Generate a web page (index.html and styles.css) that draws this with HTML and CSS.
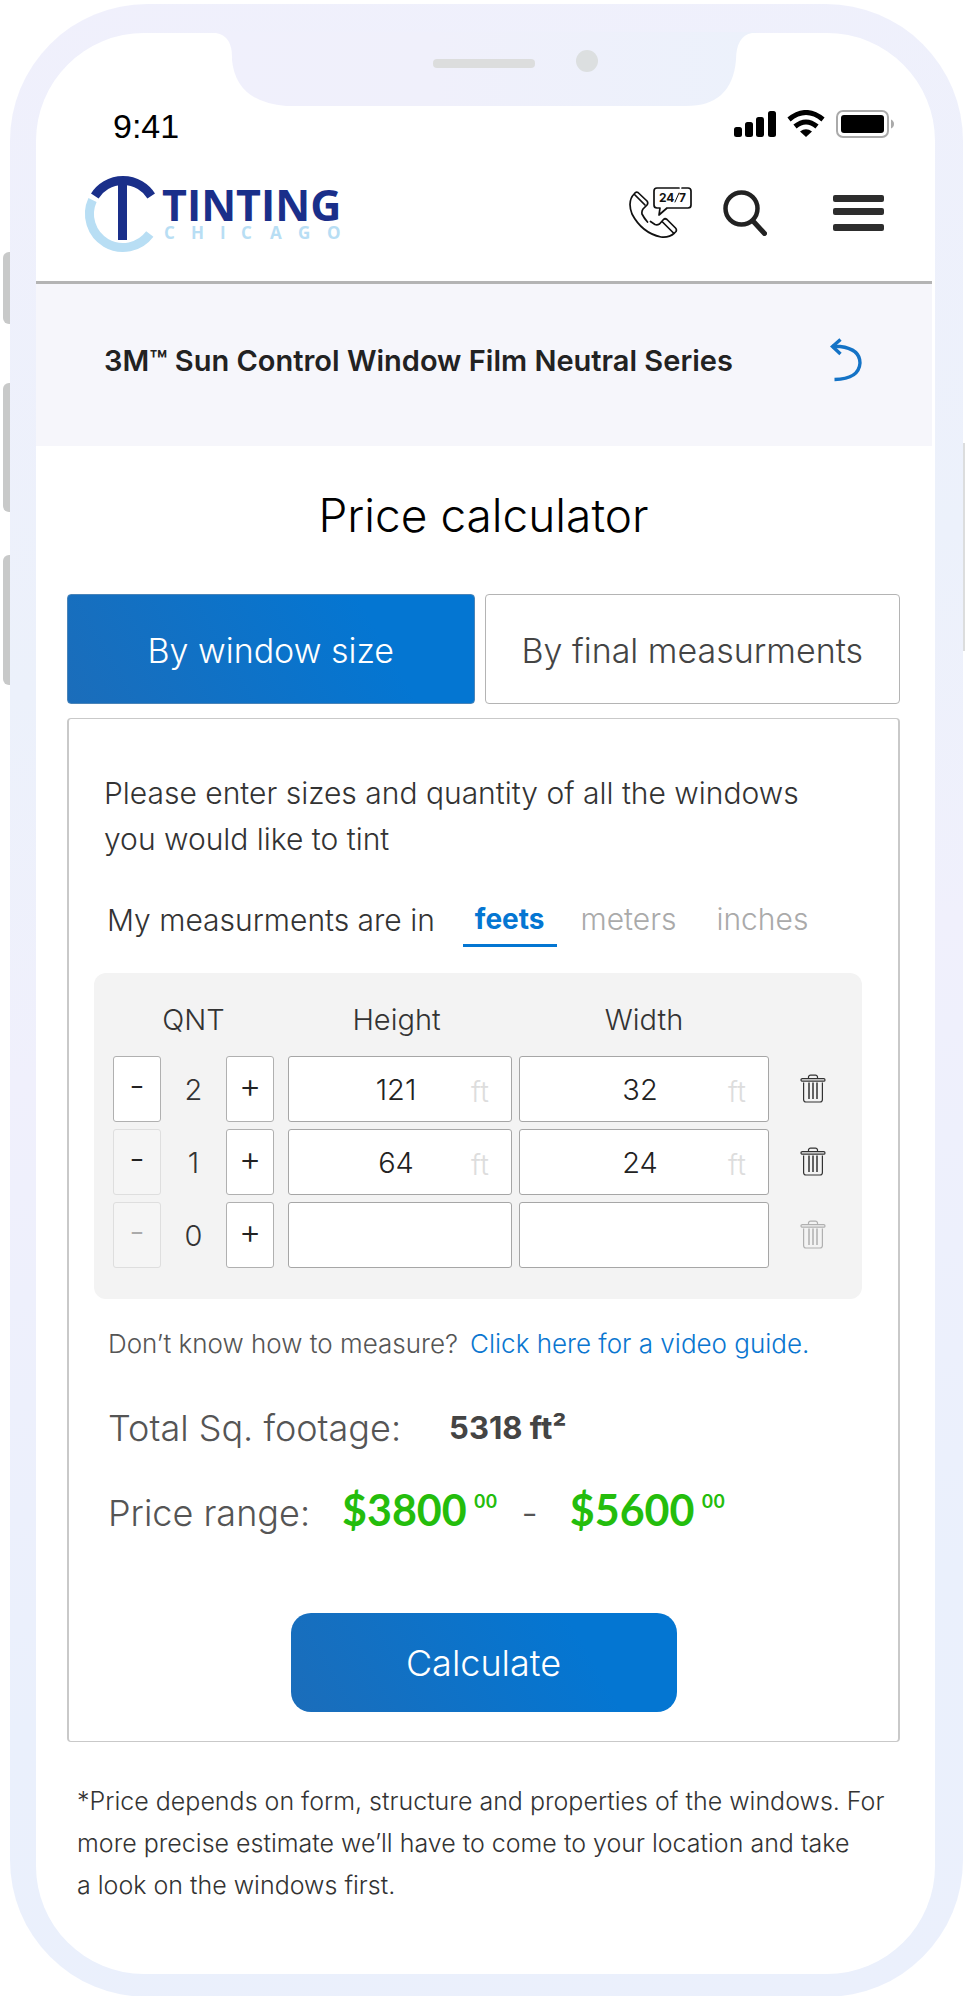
FILE: index.html
```html
<!DOCTYPE html>
<html lang="en">
<head>
<meta charset="utf-8">
<meta name="viewport" content="width=device-width, initial-scale=1">
<title>Tinting Chicago – Price calculator</title>
<link rel="stylesheet" href="styles.css">
</head>
<body>
<svg class="sprite" aria-hidden="true">
  <symbol id="trash" viewBox="0 0 26 30">
    <g fill="none" stroke="currentColor" stroke-width="1.2">
      <path d="M8.500 4V2.800Q9 1.200 10.500 1.200H15.500Q17 1.200 17.500 2.800V4"/>
      <rect x="1" y="4.600" width="24" height="2.600" rx="1.300"/>
      <path d="M3.600 8.500V25.500Q3.600 28 6 28H20Q22.400 28 22.400 25.500V8.500"/>
      <path d="M9 8.500V25M13 8.500V25M17 8.500V25" stroke-width="1.500"/>
    </g>
  </symbol>
</svg>
<div class="phone">
  <span class="side side-mute"></span>
  <span class="side side-up"></span>
  <span class="side side-down"></span>
  <span class="side side-power"></span>
  <div class="screen">
    <svg class="notch" viewBox="0 0 540 74" aria-hidden="true">
      <path fill="url(#notchFill)" d="M0 0H540V1H536Q520 4 520 28Q516 74 470 74H70Q20 70 16 28Q17 4 0 1Z"/>
      <defs><linearGradient id="notchFill"><stop offset="0" stop-color="#f0f0fc"/><stop offset=".4" stop-color="#f0f0fb"/><stop offset="1" stop-color="#ecf1fb"/></linearGradient></defs>
      <rect x="217" y="27" width="102" height="9" rx="4" fill="#dcdddd"/>
      <circle cx="371" cy="29" r="11" fill="#dcdfe0"/>
    </svg>
    <div class="status">
      <span class="time">9:41</span>
      <svg class="signals" viewBox="0 0 160 28" role="img" aria-label="Signal, Wi-Fi and battery full">
        <rect x="0" y="17" width="8" height="10" rx="2.500"/><rect x="11" y="12" width="8" height="15" rx="2.500"/><rect x="22" y="7" width="8" height="20" rx="2.500"/><rect x="34" y="1" width="8" height="26" rx="2.500"/>
        <g fill="none" stroke="#000" stroke-width="5"><path d="M55 9.500Q72 -4.500 89 9.500"/><path d="M61 16.500Q72 7.500 83 16.500"/></g>
        <path d="M66 21.500Q72 17 78 21.500L72 27Z"/>
        <rect x="103" y="1" width="51" height="26" rx="6" fill="#fff" stroke="#aaa" stroke-width="2"/>
        <rect x="107" y="5" width="43" height="18" rx="3"/>
        <path d="M157 9.500Q160 11 160 14Q160 17 157 18.500Z" fill="#aaa"/>
      </svg>
    </div>
    <header class="header">
      <a class="logo" href="#" aria-label="Tinting Chicago">
        <svg viewBox="0 0 260 76">
          <path d="M7.500 24A33.500 33.500 0 0 0 64.800 58" fill="none" stroke="#b8def4" stroke-width="9"/>
          <path d="M9.800 20A33.500 33.500 0 0 1 66.200 20" fill="none" stroke="#1a2f8a" stroke-width="9"/>
          <path d="M33 6H42V64H33Z" fill="#1a2f8a"/>
          <text class="logo-main" x="77" y="45">TINTING</text>
          <text class="logo-sub" x="79 106 135 156 185 213 242" y="63">CHICAGO</text>
        </svg>
      </a>
      <nav class="tools">
        <button class="tool" type="button" aria-label="Call us 24/7">
          <svg class="ic-phone" viewBox="0 0 64 54" fill="none" stroke="#111" stroke-width="1.700" stroke-linejoin="round" stroke-linecap="round">
            <path d="M18.500 36Q15 32 13 28Q12.500 25 14 23L18 19Q19.500 17 18 15L9 6.500Q7 5.500 5.500 7.500Q-2 15 3 28Q13 47 32 51Q40 52 45.500 47L47 45.500Q48 43.500 46.500 42L38 33.500Q36 32 34.500 33.500L30.500 38Q28 39.500 26 38.500L21.500 35.500"/>
            <path d="M5.500 8.500L16 19M33.500 36L44.500 47"/>
            <path d="M50 2H28Q25 2 25 5V19Q25 22 28 22H31L30 29L38 22H59Q62 22 62 19V5Q62 2 59 2H53"/>
            <path d="M46 16L50 7" stroke-width="1"/>
            <text class="badge" x="30" y="16">24</text><text class="badge" x="50" y="16">7</text>
          </svg>
        </button>
        <button class="tool" type="button" aria-label="Search">
          <svg class="ic-search" viewBox="0 0 44 46" fill="none" stroke="#222"><circle cx="18.500" cy="18.500" r="16" stroke-width="4.500"/><path d="M30 31L41.500 43.500" stroke-width="5" stroke-linecap="round"/></svg>
        </button>
        <button class="tool tool-menu" type="button" aria-label="Menu">
          <svg class="ic-menu" viewBox="0 0 51 36" fill="#2d2d2d"><rect width="51" height="7" rx="2"/><rect y="13" width="51" height="7" rx="2"/><rect y="29" width="51" height="7" rx="2"/></svg>
        </button>
      </nav>
    </header>
    <section class="product">
      <h1>3M™ Sun Control Window Film Neutral Series</h1>
      <a href="#" class="back" aria-label="Back">
        <svg viewBox="0 0 32 44" fill="none" stroke="#1473c6" stroke-width="3.400"><path d="M2 8.500H10Q30 11 30 25Q29 41 4.500 41.500"/><path d="M10.500 1.500L2.500 8.500L10.500 16"/></svg>
      </a>
    </section>
    <main class="main">
      <h2>Price calculator</h2>
      <div class="tabs">
        <button class="tab tab-active" type="button">By window size</button>
        <button class="tab" type="button">By final measurments</button>
      </div>
      <form class="card">
        <p class="intro">Please enter sizes and quantity of all the windows you would like to tint</p>
        <div class="units">
          <span>My measurments are in</span>
          <button class="unit unit-active" type="button">feets</button>
          <button class="unit" type="button">meters</button>
          <button class="unit" type="button">inches</button>
        </div>
        <div class="sizes">
          <table>
            <thead><tr><th class="c-qnt">QNT</th><th class="c-height">Height</th><th class="c-width">Width</th><td class="c-del"></td></tr></thead>
            <tbody>
              <tr>
                <td><div class="stepper"><button type="button" aria-label="Decrease">-</button><output>2</output><button type="button" aria-label="Increase">+</button></div></td>
                <td><div class="field"><input aria-label="Height 1" value="121"><span>ft</span></div></td>
                <td><div class="field"><input aria-label="Width 1" value="32"><span>ft</span></div></td>
                <td><button class="del" type="button" aria-label="Delete row 1"><svg><use href="#trash"/></svg></button></td>
              </tr>
              <tr>
                <td><div class="stepper"><button class="min" type="button" aria-label="Decrease">-</button><output>1</output><button type="button" aria-label="Increase">+</button></div></td>
                <td><div class="field"><input aria-label="Height 2" value="64"><span>ft</span></div></td>
                <td><div class="field"><input aria-label="Width 2" value="24"><span>ft</span></div></td>
                <td><button class="del" type="button" aria-label="Delete row 2"><svg><use href="#trash"/></svg></button></td>
              </tr>
              <tr>
                <td><div class="stepper"><button class="min" type="button" aria-label="Decrease" disabled>-</button><output>0</output><button type="button" aria-label="Increase">+</button></div></td>
                <td><div class="field"><input aria-label="Height 3"></div></td>
                <td><div class="field"><input aria-label="Width 3"></div></td>
                <td><button class="del" type="button" aria-label="Delete row 3" disabled><svg><use href="#trash"/></svg></button></td>
              </tr>
            </tbody>
          </table>
        </div>
        <p class="help"><span>Don’t know how to measure?</span><a href="#">Click here for a video guide.</a></p>
        <p class="total"><span>Total Sq. footage:</span><strong>5318 ft²</strong></p>
        <p class="range"><span>Price range:</span><strong>$3800</strong><sup>00</sup><span class="dash">-</span><strong>$5600</strong><sup>00</sup></p>
        <button class="calculate" type="button">Calculate</button>
      </form>
      <p class="note">*Price depends on form, structure and properties of the windows. For more precise estimate we’ll have to come to your location and take a&nbsp;look on the windows first.</p>
    </main>
  </div>
</div>
</body>
</html>
```
FILE: styles.css
```css
* { box-sizing: border-box; }
body { margin: 0; background: #fff; color: #333; font-family: Inter, "Liberation Sans", sans-serif; font-weight: 300; font-size: 29px; }
h1, h2, p { margin: 0; }
button, input { font: inherit; color: inherit; padding: 0; margin: 0; }
button { background: none; border: 0; }
a { color: #0a76d0; text-decoration: none; }
svg { display: block; }
.sprite { position: absolute; width: 0; height: 0; }

.phone { position: relative; margin: 4px 2px 0 10px; padding: 29px 28px 23px 26px; border-radius: 137px; background: linear-gradient(170deg, #f0f0fc 0%, #ecf1fb 32%, #f0f0fc 50%, #eaf0fc 80%, #ebf0fc 100%); }
.screen { position: relative; border-radius: 108px; background: #fff; padding-right: 3px; }
.side { position: absolute; left: -7px; width: 7px; background: #c8c9c9; border-radius: 6px 0 0 6px; }
.side-mute { top: 248px; height: 72px; }
.side-up { top: 379px; height: 129px; }
.side-down { top: 551px; height: 130px; }
.side-power { top: 439px; left: auto; right: -2px; width: 2px; height: 208px; border-radius: 0; background: #dcdddd; }
.notch { position: absolute; top: -1px; left: 50%; width: 540px; margin-left: -270px; }

.status { display: flex; justify-content: space-between; align-items: center; padding: 74px 38px 0 77px; height: 112px; }
.time { font: 400 34px/40px "Liberation Sans", Arial, sans-serif; color: #000; }
.signals { width: 160px; height: 28px; margin-bottom: 5px; }

.header { display: flex; justify-content: space-between; padding: 31px 48px 0 49px; height: 139px; border-bottom: 3px solid #b4b4b4; }
.logo svg { width: 260px; height: 76px; overflow: visible; }
.logo-main { font: 700 43px "Open Sans", sans-serif; fill: #1a2f8a; }
.logo-sub { font: 700 17px "Open Sans", sans-serif; fill: #b8def4; }
.tools { display: flex; align-items: flex-start; padding-top: 10px; }
.tool { height: 54px; }
.ic-phone { width: 64px; height: 54px; }
.badge { font: 700 12px Inter, sans-serif; fill: #111; stroke: none; }
.ic-search { width: 44px; height: 46px; margin: 0 66px 0 30px; }
.ic-menu { width: 51px; height: 36px; }

.product { display: flex; justify-content: space-between; align-items: flex-start; background: #f6f6fb; padding: 54px 70px 0 68px; height: 162px; }
.product h1 { font-weight: 600; font-size: 29px; line-height: 46px; color: #222; }
.back svg { width: 32px; height: 44px; }

.main { padding: 41px 32px 0 31px; }
h2 { font-weight: 300; font-size: 46px; line-height: 56px; text-align: center; color: #000; }
.tabs { display: flex; gap: 10px; margin-top: 51px; }
.tab { flex: 417; height: 110px; padding-top: 2px; font-size: 34px; color: #444; border: 1px solid #b4b4b4; border-radius: 4px; background: #fff; }
.tab-active { flex: 409; color: #fff; border-color: #4a84b8; background: linear-gradient(60deg, #1b6dba, #0476d2 75%); }

.card { margin-top: 14px; border: 2px solid #c9c9c9; border-width: 1px 2px; border-radius: 4px; padding: 51px 25px 29px; }
.intro { font-size: 30px; line-height: 46px; padding: 0 44px 0 10px; }
.units { display: flex; align-items: center; margin-top: 30px; padding-left: 13px; font-size: 30px; line-height: 46px; }
.unit { height: 55px; padding: 4px 12px 2px; color: #aaa; border-bottom: 3px solid transparent; line-height: 46px; }
.unit-active { margin: 0 12px 0 28px; color: #0476d2; font-weight: 700; font-size: 28px; border-color: #0476d2; }
.unit:last-child { margin-left: 16px; }

.sizes { margin: 26px 11px 0 0; padding: 22px 37px 24px 19px; background: #f3f3f3; border-radius: 12px; }
.sizes table { width: 100%; table-layout: fixed; border-collapse: collapse; }
.sizes th, .sizes td { padding: 0; }
.sizes th { font-weight: 300; height: 61px; line-height: 50px; vertical-align: top; padding-right: 14px; }
.sizes th.c-width { padding-right: 0; }
.c-qnt { width: 175px; }
.c-height { width: 231px; }
.c-del { width: 56px; }
.stepper { display: flex; padding-right: 14px; margin-bottom: 7px; }
.stepper button { width: 48px; height: 66px; background: #fff; border: 1px solid #b0b0b0; border-radius: 3px; color: #222; font-size: 34px; padding-bottom: 8px; }
.stepper button.min { background: #f5f5f5; border-color: #dedede; }
.stepper button:disabled { color: #aaa; }
.stepper output { flex: 1; text-align: center; line-height: 68px; height: 66px; }
.field { position: relative; margin-bottom: 7px; }
td:nth-child(2) .field { margin-right: 7px; }
.field input { display: block; width: 100%; height: 66px; padding: 0 8px 0 0; text-align: center; background: #fff; border: 1px solid #a6a6a6; border-radius: 3px; color: #222; }
.field span { position: absolute; right: 23px; top: 4px; line-height: 64px; color: #ddd; }
.del { display: block; margin: 0 0 7px 31px; color: #333; }
.del svg { width: 26px; height: 30px; }
.del:disabled { color: #b0b0b0; }

.help { display: flex; gap: 12px; margin-top: 27px; padding-left: 14px; font-size: 26px; line-height: 36px; color: #555; }
.total { display: flex; gap: 48px; margin-top: 41px; padding-left: 14px; font-size: 36px; line-height: 50px; color: #555; }
.total strong { font-weight: 700; font-size: 31px; color: #444; }
.range { display: flex; margin-top: 33px; padding-left: 14px; font-size: 36px; line-height: 54px; color: #555; }
.range strong { margin-left: 32px; font: 700 43px/48px Lato, sans-serif; color: #24bd0c; }
.range sup { margin-left: 7px; font-size: 18px; line-height: 32px; font-weight: 600; color: #24bd0c; }
.dash { margin-left: 24px; }
.calculate { display: block; width: 386px; max-width: 100%; height: 99px; margin: 73px auto 0; border-radius: 20px; color: #fff; font-size: 36px; background: linear-gradient(60deg, #1b6dba, #0476d2 75%); }
.note { padding: 38px 6px 68px 10px; font-size: 25px; line-height: 42px; }
```
